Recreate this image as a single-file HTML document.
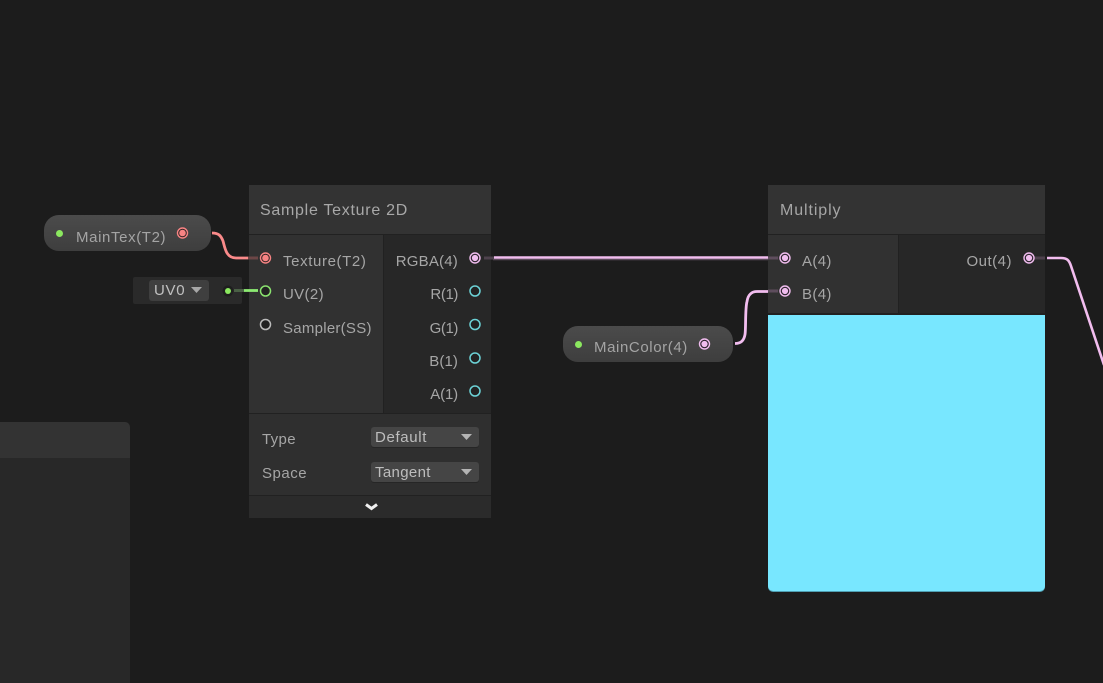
<!DOCTYPE html>
<html><head><meta charset="utf-8">
<style>
html,body{margin:0;padding:0;background:#1c1c1c;width:1103px;height:683px;overflow:hidden}
#r{position:relative;width:1103px;height:683px;overflow:hidden;font-family:"Liberation Sans",sans-serif;color:#a6a6a6;font-size:15px}
.b{position:absolute}
.t{position:absolute;white-space:nowrap;line-height:18px;letter-spacing:.35px}
.tr{position:absolute;white-space:nowrap;line-height:18px;letter-spacing:.35px;text-align:right}
svg{position:absolute;left:0;top:0}
</style></head><body><div id="r">
<!-- bottom-left node -->
<div class="b" style="left:-10px;top:422px;width:140px;height:36px;background:#333333;border-radius:0 5px 0 0"></div>
<div class="b" style="left:-10px;top:458px;width:140px;height:225px;background:#282828"></div>
<!-- node 1 -->
<div class="b" style="left:249px;top:185px;width:242px;height:333px;background:#212121"></div>
<div class="b" style="left:249px;top:185px;width:242px;height:49px;background:#333333"></div>
<div class="b" style="left:249px;top:235px;width:134px;height:178px;background:#313131"></div>
<div class="b" style="left:384px;top:235px;width:107px;height:178px;background:#272727"></div>
<div class="b" style="left:249px;top:414px;width:242px;height:81px;background:#2f2f2f"></div>
<div class="b" style="left:249px;top:496px;width:242px;height:22px;background:#2b2b2b"></div>
<div class="t" style="left:260px;top:202px;font-size:16px;letter-spacing:.72px;color:#a8a8a8">Sample Texture 2D</div>
<div class="t" style="left:283px;top:253px;letter-spacing:.62px">Texture(T2)</div>
<div class="t" style="left:283px;top:286px">UV(2)</div>
<div class="t" style="left:283px;top:320px;letter-spacing:.26px">Sampler(SS)</div>
<div class="tr" style="right:645px;top:253px;letter-spacing:.2px">RGBA(4)</div>
<div class="tr" style="right:645px;top:286px;letter-spacing:-.4px">R(1)</div>
<div class="tr" style="right:645px;top:320px;letter-spacing:-.4px">G(1)</div>
<div class="tr" style="right:645px;top:353px;letter-spacing:.1px">B(1)</div>
<div class="tr" style="right:645px;top:386px;letter-spacing:-.15px">A(1)</div>
<div class="t" style="left:262px;top:431px">Type</div>
<div class="t" style="left:262px;top:465px;letter-spacing:.5px">Space</div>
<div class="b" style="left:371px;top:427px;width:108px;height:20px;background:#454545;border-radius:3px;box-shadow:0 1px 0 #262626"></div>
<div class="b" style="left:371px;top:462px;width:108px;height:20px;background:#454545;border-radius:3px;box-shadow:0 1px 0 #262626"></div>
<div class="t" style="left:375px;top:429px;color:#bdbdbd;letter-spacing:.65px">Default</div>
<div class="t" style="left:375px;top:464px;color:#bdbdbd;letter-spacing:.35px">Tangent</div>
<!-- node 2 -->
<div class="b" style="left:768px;top:185px;width:277px;height:130px;background:#212121"></div>
<div class="b" style="left:768px;top:185px;width:277px;height:49px;background:#333333"></div>
<div class="b" style="left:768px;top:235px;width:130px;height:78px;background:#313131"></div>
<div class="b" style="left:899px;top:235px;width:146px;height:78px;background:#272727"></div>
<div class="b" style="left:768px;top:315px;width:277px;height:276px;background:#78e7ff;border-radius:0 0 5px 5px;box-shadow:0 1px 0 #4f9fb3"></div>
<div class="t" style="left:780px;top:202px;font-size:16px;letter-spacing:.9px">Multiply</div>
<div class="t" style="left:802px;top:253px">A(4)</div>
<div class="t" style="left:802px;top:286px">B(4)</div>
<div class="tr" style="right:91px;top:253px;letter-spacing:.5px">Out(4)</div>
<!-- pills -->
<div class="b" style="left:44px;top:215px;width:167px;height:36px;border-radius:15px;background:linear-gradient(#4b4b4b,#3e3e3e)"></div>
<div class="t" style="left:76px;top:229px;color:#a4a4a4;letter-spacing:.62px">MainTex(T2)</div>
<div class="b" style="left:563px;top:326px;width:170px;height:36px;border-radius:15px;background:linear-gradient(#4b4b4b,#3e3e3e)"></div>
<div class="t" style="left:594px;top:339px;color:#a4a4a4;letter-spacing:.6px">MainColor(4)</div>
<!-- UV0 -->
<div class="b" style="left:133px;top:277px;width:109px;height:27px;background:#2a2a2a;border-radius:2px"></div>
<div class="b" style="left:149px;top:280px;width:60px;height:21px;background:#3f3f3f;border-radius:3px"></div>
<div class="t" style="left:154px;top:282px;color:#c0c0c0;letter-spacing:.7px">UV0</div>
<svg width="1103" height="683" viewBox="0 0 1103 683" fill="none">
<!-- dropdown arrows -->
<path d="M191 287h11l-5.500 6z" fill="#a8a8a8"/>
<path d="M461 434h11l-5.500 6z" fill="#b4b4b4"/>
<path d="M461 469h11l-5.500 6z" fill="#b4b4b4"/>
<!-- chevron -->
<path d="M366 504.500l5.500 4 5.500-4" stroke="#f0f0f0" stroke-width="3"/>
<!-- wires -->
<path d="M212 233c7 0 9 3 11 8c2 7 3 17 13 17h12" stroke="#fa8a8a" stroke-width="2.800"/>
<path d="M248 258h10" stroke="#6c4646" stroke-width="3"/>
<path d="M244 290.500h14" stroke="#8cea72" stroke-width="2.800"/>
<path d="M234 290.500h10" stroke="#4a6045" stroke-width="3"/>
<path d="M493 259.500h275" stroke="#5b4a5a" stroke-width="1.500"/>
<path d="M494 257.500h274" stroke="#f2bdef" stroke-width="2.600"/>
<path d="M768 258h10" stroke="#5e4d5d" stroke-width="3"/>
<path d="M768 291h10" stroke="#5e4d5d" stroke-width="3"/>
<path d="M484 258h10" stroke="#4e424d" stroke-width="3"/>
<path d="M1034 258h11" stroke="#4e424d" stroke-width="3"/>
<path d="M735 343.500c6 0 9-3 10-9c1-5 0-26 2-33c1-7 5-10 10-10h11" stroke="#f2bdef" stroke-width="2.800"/>
<path d="M1047 258h14c6 0 8 2 10 8l33 99" stroke="#f2bdef" stroke-width="2.600"/>
<!-- pill dots/ports -->
<circle cx="59.500" cy="233.500" r="3.500" fill="#8be85f"/>
<circle cx="182.500" cy="233" r="5" stroke="#f78383" stroke-width="1.400" fill="#2c2222"/>
<circle cx="182.500" cy="233" r="3.300" fill="#f78383"/>
<circle cx="578.500" cy="344.500" r="3.500" fill="#8be85f"/>
<circle cx="704.500" cy="344" r="5" stroke="#f0bcee" stroke-width="1.400" fill="#2e252e"/>
<circle cx="704.500" cy="344" r="3.100" fill="#f0bcee"/>
<circle cx="228" cy="291" r="5.500" fill="#1e1e1e"/>
<circle cx="228" cy="291" r="3" fill="#8be85f"/>
<!-- node1 inputs -->
<circle cx="265.500" cy="258" r="5" stroke="#f78383" stroke-width="1.400" fill="#2c2222"/>
<circle cx="265.500" cy="258" r="3.300" fill="#f78383"/>
<circle cx="265.500" cy="291" r="5" stroke="#8ae36f" stroke-width="1.500" fill="#222"/>
<circle cx="265.500" cy="324.500" r="5" stroke="#bdbdbd" stroke-width="1.500" fill="#222"/>
<circle cx="475" cy="258" r="5" stroke="#f0bcee" stroke-width="1.400" fill="#2e252e"/>
<circle cx="475" cy="258" r="3.100" fill="#f0bcee"/>
<circle cx="475" cy="291" r="5" stroke="#6cd2d6" stroke-width="1.500" fill="#222"/>
<circle cx="475" cy="324.500" r="5" stroke="#6cd2d6" stroke-width="1.500" fill="#222"/>
<circle cx="475" cy="358" r="5" stroke="#6cd2d6" stroke-width="1.500" fill="#222"/>
<circle cx="475" cy="391" r="5" stroke="#6cd2d6" stroke-width="1.500" fill="#222"/>
<!-- node2 -->
<circle cx="785" cy="258" r="5" stroke="#f0bcee" stroke-width="1.400" fill="#2e252e"/>
<circle cx="785" cy="258" r="3.100" fill="#f0bcee"/>
<circle cx="785" cy="291" r="5" stroke="#f0bcee" stroke-width="1.400" fill="#2e252e"/>
<circle cx="785" cy="291" r="3.100" fill="#f0bcee"/>
<circle cx="1029" cy="258" r="5" stroke="#f0bcee" stroke-width="1.400" fill="#2e252e"/>
<circle cx="1029" cy="258" r="3.100" fill="#f0bcee"/>
</svg>
</div></body></html>
